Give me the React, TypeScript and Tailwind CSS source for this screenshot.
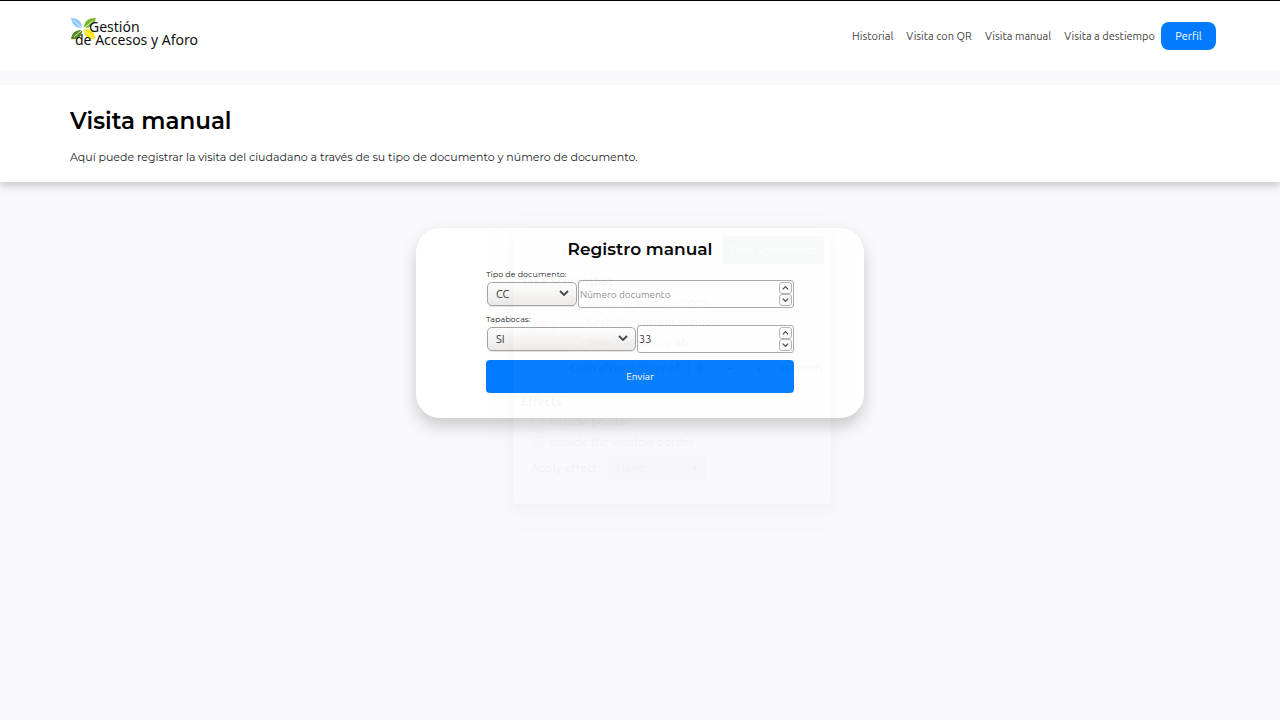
import { useState } from "react";
import type { ReactNode } from "react";

const links = ["Historial", "Visita con QR", "Visita manual", "Visita a destiempo"];

function Leaves() {
  return (
    <svg viewBox="0 0 26 24" className="absolute left-0 top-0 h-6 w-[26px]" aria-hidden="true">
      <path d="M1 1C7 1 12 4 12 11C6 11 2 8 1 1Z" fill="#8cc8fb" />
      <path d="M14 11C14 4 18 1 26 1C24 8 20 11 14 11Z" fill="#7ab52e" />
      <path d="M1 22C2 15 6 13 12 13C12 20 8 23 1 22Z" fill="#568a20" />
      <path d="M14 12C21 12 25 15 25 22C18 23 14 19 14 12Z" fill="#fbe60c" />
      <path d="M3 3L12 11M23 4L14 11M4 20L12 13M23 21L14 13" fill="none" stroke="#fff" strokeWidth="0.8" />
    </svg>
  );
}

function Chevron({ up = false, className }: { up?: boolean; className: string }) {
  return (
    <svg viewBox="0 0 10 6" className={className} aria-hidden="true">
      <path d={up ? "M1 5L5 1L9 5" : "M1 1L5 5L9 1"} fill="none" stroke="#3d4245" strokeWidth="1.8" />
    </svg>
  );
}

function SelectBox({ id, label, options, width }: { id: string; label: string; options: string[]; width: string }) {
  return (
    <div className={`relative ml-px ${width}`}>
      <select
        id={id}
        aria-label={label}
        className="block h-6 w-full appearance-none rounded-[5px] border border-[#a5a3a1] bg-linear-to-b from-white to-[#eceae8] pl-2 text-[11px] text-[#2e3436] shadow-[0_1px_0_#0000001a]"
      >
        {options.map((o) => (
          <option key={o}>{o}</option>
        ))}
      </select>
      <Chevron className="pointer-events-none absolute right-2 top-2 h-1.5 w-2.5" />
    </div>
  );
}

function NumberBox({ label, initial, placeholder }: { label: string; initial: string; placeholder?: string }) {
  const [value, setValue] = useState(initial);
  const step = (n: number) => setValue(String(Number(value) + n));
  const key = "flex h-3 w-[13px] items-center justify-center rounded-[3px] border border-[#b5b3b1] bg-[#fafafa]";
  return (
    <div className="flex h-7 min-w-0 flex-1 items-center rounded-[3px] border border-[#aaa8a6] bg-white">
      <input
        type="number"
        aria-label={label}
        value={value}
        placeholder={placeholder}
        onChange={(e) => setValue(e.target.value)}
        className="min-w-0 flex-1 bg-transparent pl-px text-[11px] text-[#2e3436] outline-none [appearance:textfield] placeholder:text-[10px] placeholder:text-[#8f8f8f] [&::-webkit-inner-spin-button]:appearance-none"
      />
      <div className="flex flex-col pr-px">
        <button type="button" aria-label="Aumentar" onClick={() => step(1)} className={key}>
          <Chevron up className="h-1 w-[7px]" />
        </button>
        <button type="button" aria-label="Disminuir" onClick={() => step(-1)} className={key}>
          <Chevron className="h-1 w-[7px]" />
        </button>
      </div>
    </div>
  );
}

function Line({ children, className }: { children: ReactNode; className: string }) {
  return <div className={`flex h-5 items-center ${className}`}>{children}</div>;
}

function FadingDialog() {
  return (
    <div
      aria-hidden="true"
      className="pointer-events-none absolute left-[97px] top-1 h-[272px] w-[318px] bg-[#fafafc] font-['Ubuntu','Noto_Sans',sans-serif] text-xs whitespace-nowrap text-black opacity-[0.03] shadow-[0_4px_16px_#000000]"
    >
      <div className="flex h-9 items-center justify-between bg-[#f5f4f3] px-[7px]">
        <span className="flex h-7 w-[102px] items-center justify-center rounded border border-[#cdc7c2] text-[#777]">Cancel</span>
        <span className="flex h-7 w-[102px] items-center justify-center rounded bg-[#2c7b4b] text-white">Take Screenshot</span>
      </div>
      <div className="px-2 pt-1">
        <Line className="font-bold">Take Screenshot</Line>
        <div className="flex">
          <div className="flex w-[50px] items-center">
            <svg viewBox="0 0 36 28" className="h-7 w-9">
              <rect x="1" y="4" width="34" height="23" rx="3" fill="#ddd" />
              <circle cx="22" cy="16" r="9" fill="#eee" />
              <circle cx="22" cy="16" r="4" fill="#777" />
            </svg>
          </div>
          <div>
            {["Grab the whole screen", "Grab the current window", "Select area to grab"].map((t) => (
              <Line key={t} className="gap-1">
                <span className="h-3 w-3 rounded-full border border-[#999] bg-white" />
                {t}
              </Line>
            ))}
          </div>
        </div>
        <div className="flex h-8 items-center gap-2 pl-[49px]">
          <span>Grab after a delay of</span>
          <span className="flex h-6 w-[85px] items-center justify-between rounded border border-[#aaa] px-2">
            <span>0</span>
            <span>−</span>
            <span>+</span>
          </span>
          <span>seconds</span>
        </div>
        <Line className="mt-2 font-bold">Effects</Line>
        <Line className="gap-1.5 pl-2.5">
          <span className="h-3 w-3 border border-[#999]" />
          Include pointer
        </Line>
        <Line className="gap-1.5 pl-2.5">
          <span className="h-3 w-3 border border-[#ccc] bg-[#ccc]" />
          Include the window border
        </Line>
        <div className="flex h-8 items-center gap-2 pl-2.5">
          <span>Apply effect:</span>
          <span className="flex h-6 w-[98px] items-center justify-between rounded bg-[#d8d6a8] px-2">
            <span>None</span>
            <svg viewBox="0 0 6 4" className="h-1 w-1.5"><path d="M0 0H6L3 4Z" /></svg>
          </span>
        </div>
      </div>
    </div>
  );
}

export default function App() {
  return (
    <div className="min-h-screen border-t border-black bg-[#f9f9fc] font-['Ubuntu','Noto_Sans',sans-serif]">
      <header className="flex h-[70px] items-center justify-between bg-white pl-[70px] pr-16">
        <a href="#inicio" className="relative mb-2.5 block pl-[5px] pt-[3px] font-['Noto_Sans',sans-serif] text-sm leading-[13px] text-[#111]">
          <Leaves />
          <span className="relative block pl-3.5">Gestión</span>
          <span className="relative block">de Accesos y Aforo</span>
        </a>
        <nav className="flex items-center gap-[13px] text-[11px] text-[#444]">
          {links.map((l) => (
            <a key={l} href="#seccion">{l}</a>
          ))}
          <button type="button" className="-ml-[7px] h-7 w-[55px] rounded-lg bg-[#007bff] text-white">Perfil</button>
        </nav>
      </header>

      <section className="mt-3.5 bg-white px-[70px] pb-4 pt-5 font-['Montserrat','Inter',sans-serif] shadow-[0_4px_8px_#00000030] [clip-path:inset(0_0_-20px_0)]">
        <h1 className="text-[23px] leading-8 font-semibold text-black">Visita manual</h1>
        <p className="mt-3 text-[11px] leading-[17px] text-[#212529]">
          Aquí puede registrar la visita del ciudadano a través de su tipo de documento y número de documento.
        </p>
      </section>

      <main className="relative mx-auto mt-[46px] w-full max-w-md">
        <form
          onSubmit={(e) => e.preventDefault()}
          className="rounded-3xl bg-white px-[70px] pb-[25px] pt-[9px] shadow-[0_8px_16px_#00000030]"
        >
          <h2 className="mb-[7px] text-center font-['Montserrat','Inter',sans-serif] text-[17px] leading-6 font-semibold text-black">
            Registro manual
          </h2>
          <label htmlFor="tipo" className="block font-['Montserrat','Inter',sans-serif] text-[8px] leading-3 text-[#212529]">
            Tipo de documento:
          </label>
          <div className="flex items-center gap-px">
            <SelectBox id="tipo" label="Tipo de documento" options={["CC", "TI", "CE"]} width="w-[90px]" />
            <NumberBox label="Número documento" initial="" placeholder="Número documento" />
          </div>
          <label htmlFor="tapabocas" className="mt-[5px] block font-['Montserrat','Inter',sans-serif] text-[8px] leading-3 text-[#212529]">
            Tapabocas:
          </label>
          <div className="flex items-center gap-px">
            <SelectBox id="tapabocas" label="Tapabocas" options={["SI", "NO"]} width="w-[149px]" />
            <NumberBox label="Temperatura" initial="33" />
          </div>
          <button type="submit" className="mt-[7px] h-[33px] w-full rounded bg-[#007bff] text-[10px] text-white">
            Enviar
          </button>
        </form>
        <FadingDialog />
      </main>
    </div>
  );
}
